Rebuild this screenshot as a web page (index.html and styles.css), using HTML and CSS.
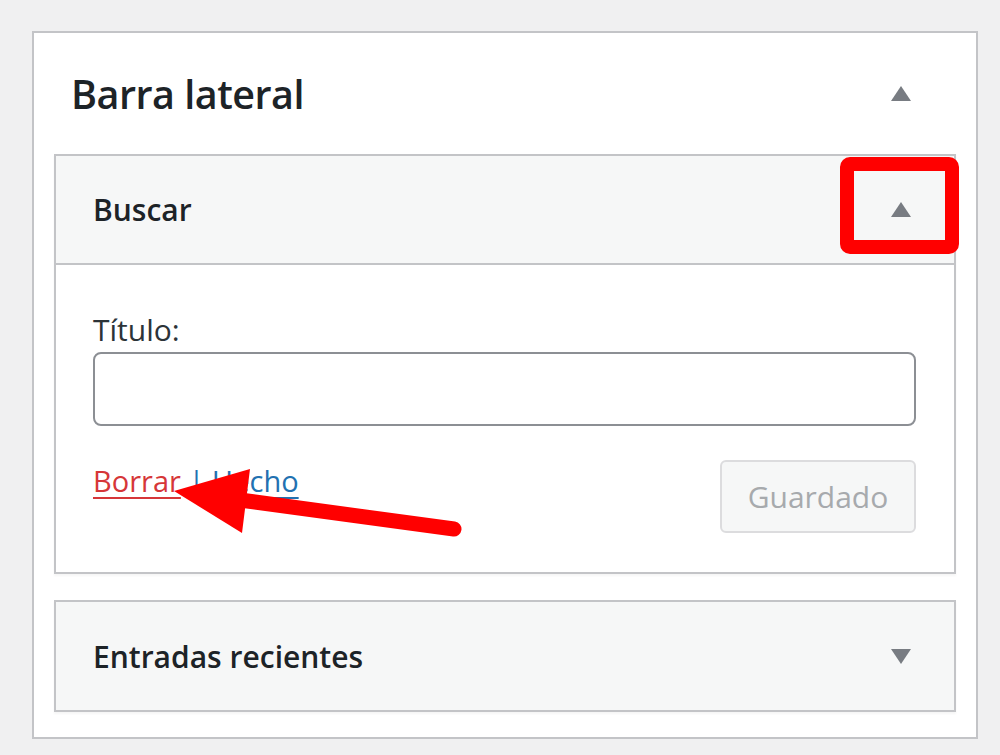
FILE: index.html
```html
<!DOCTYPE html>
<html lang="es">
<head>
  <meta charset="UTF-8">
  <meta name="viewport" content="width=device-width, initial-scale=1.0">
  <title>Widgets</title>
  <link rel="stylesheet" href="styles.css">
</head>
<body>
  <div class="sidebar">
    <div class="sidebar-name">
      <h2>Barra lateral</h2>
      <span class="toggle up"></span>
    </div>

    <div class="widget open">
      <div class="widget-top">
        <h3>Buscar</h3>
        <span class="toggle up"></span>
      </div>
      <div class="widget-inside">
        <label for="title">Título:</label>
        <input type="text" id="title">
        <div class="widget-actions">
          <div class="links">
            <a href="#" class="remove">Borrar</a> | <a href="#" class="done">Hecho</a>
          </div>
          <button type="button" class="save" disabled>Guardado</button>
        </div>
      </div>
    </div>

    <div class="widget">
      <div class="widget-top">
        <h3>Entradas recientes</h3>
        <span class="toggle down"></span>
      </div>
    </div>
  </div>

  <svg class="marks" width="1000" height="755" viewBox="0 0 1000 755">
    <rect x="847" y="164" width="105" height="83" rx="3" fill="none" stroke="#ff0000" stroke-width="14" stroke-linejoin="round"/>
    <line x1="240" y1="500" x2="454" y2="529" stroke="#ff0000" stroke-width="15" stroke-linecap="round"/>
    <polygon points="174,491 250,469 242,533" fill="#ff0000"/>
  </svg>
</body>
</html>
```

FILE: styles.css
```css
body {
  margin: 0;
  padding: 0;
  background-color: #f0f0f1;
  font-family: "Open Sans", "Noto Sans", sans-serif;
  color: #1d2327;
  position: relative;
  height: 755px;
  overflow: hidden;
}

.sidebar {
  box-sizing: border-box;
  width: 946px;
  height: 708px;
  margin: 31px 0 0 32px;
  padding: 0 20px 25px;
  background-color: #fff;
  border: 2px solid #c3c4c7;
}

.sidebar-name {
  height: 121px;
  display: flex;
  align-items: center;
  justify-content: space-between;
  padding: 0 45px 0 17px;
}

.sidebar-name h2 {
  margin: 0;
  font-size: 39.5px;
  letter-spacing: -0.5px;
  font-weight: 600;
  color: #1d2327;
}

.toggle {
  width: 0;
  height: 0;
  border-left: 10px solid transparent;
  border-right: 10px solid transparent;
}

.toggle.up {
  border-bottom: 15px solid #787c82;
}

.toggle.down {
  border-top: 15px solid #787c82;
}

.widget {
  border: 2px solid #c3c4c7;
  box-shadow: 0 2px 2px rgba(0, 0, 0, 0.04);
  margin-bottom: 26px;
}

.widget:last-child {
  margin-bottom: 0;
}

.widget-top {
  height: 108px;
  display: flex;
  align-items: center;
  justify-content: space-between;
  padding: 0 43px 0 37px;
  background-color: #f6f7f7;
}

.widget.open .widget-top {
  height: 107px;
  border-bottom: 2px solid #c3c4c7;
}

.widget-top h3 {
  margin: 0;
  font-size: 30px;
  font-weight: 600;
  color: #1d2327;
}

.widget-inside {
  padding: 44px 38px 39px 37px;
  background-color: #fff;
}

.widget-inside label {
  display: block;
  font-size: 30px;
  line-height: 42px;
  color: #2c3338;
}

.widget-inside input {
  display: block;
  box-sizing: border-box;
  width: 100%;
  height: 74px;
  margin: 1px 0 0;
  border: 2px solid #8c8f94;
  border-radius: 8px;
  background-color: #fff;
}

.widget-actions {
  display: flex;
  align-items: flex-start;
  justify-content: space-between;
  margin-top: 34px;
}

.links {
  font-size: 29px;
  line-height: 42px;
  color: #2271b1;
}

.links a {
  text-decoration: underline;
  text-decoration-thickness: 2px;
  text-underline-offset: 5px;
}

.remove {
  color: #d63638;
}

.done {
  color: #2271b1;
}

.save {
  box-sizing: border-box;
  width: 196px;
  height: 73px;
  padding: 0;
  font-family: inherit;
  font-size: 30px;
  color: #a7aaad;
  background-color: #f6f7f7;
  border: 2px solid #dcdcde;
  border-radius: 6px;
}

.marks {
  position: absolute;
  left: 0;
  top: 0;
  pointer-events: none;
}
```
